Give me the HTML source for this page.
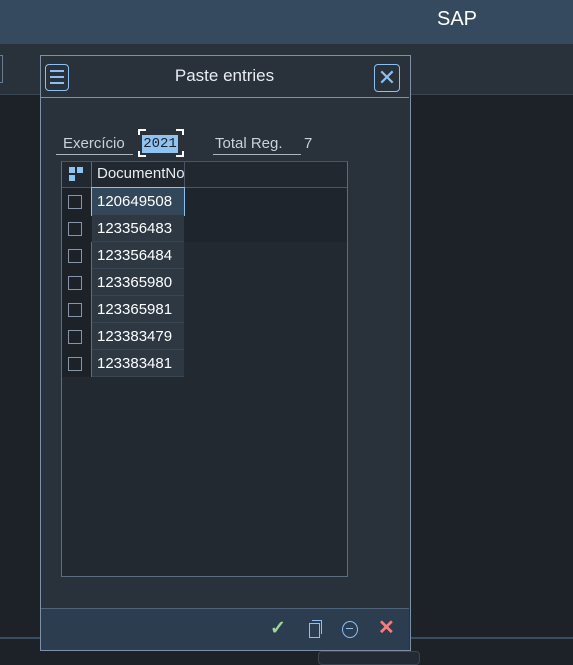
<!DOCTYPE html>
<html><head><style>
html,body{margin:0;height:659px}
body{width:573px;background:#1d2229;font-family:"Liberation Sans",sans-serif;position:relative;overflow:hidden;color:#e8edf2}
.a{position:absolute}
</style></head><body>
<div class="a" style="left:0;top:0;width:573px;height:44px;background:#354a5f"></div>
<div class="a" style="left:437px;top:8px;font-size:20px;color:#fff">SAP</div>
<div class="a" style="left:0;top:44px;width:573px;height:50px;background:#29313a;border-bottom:1px solid #3a4552"></div>
<div class="a" style="left:-4px;top:55px;width:5px;height:26px;border:1px solid #6a7c90"></div>
<div class="a" style="left:0;top:637px;width:573px;height:22px;background:#1d2229;border-top:2px solid #3a4d60"></div>
<div class="a" style="left:318px;top:651px;width:100px;height:12px;background:#232a33;border:1px solid #3a4552;border-radius:4px"></div>
<!-- dialog -->
<div class="a" style="left:40px;top:55px;width:369px;height:594px;background:#29313a;border:1px solid #7d90a5"></div>
<div class="a" style="left:41px;top:97px;width:368px;height:1px;background:#7d90a5"></div>
<div class="a" style="left:45px;top:64px;width:22px;height:25px;border:1px solid #8cc0f0;border-radius:4px"></div>
<div class="a" style="left:50px;top:70px;width:14px;height:2px;background:#8cc0f0;box-shadow:0 6px #8cc0f0,0 12px #8cc0f0"></div>
<div class="a" style="left:374px;top:64px;width:24px;height:26px;border:1px solid #8cc0f0;border-radius:4px;color:#8cc0f0;font-size:22px;text-align:center;line-height:25px">✕</div>
<div class="a" style="left:0;top:66px;width:449px;text-align:center;font-size:17px">Paste entries</div>
<div class="a" style="left:63px;top:135px;font-size:15px;color:#c8d2dc">Exercício</div>
<div class="a" style="left:56px;top:154px;width:77px;height:1px;background:#aab4be"></div>
<div class="a" style="left:142px;top:135px;width:36px;height:18px;background:#8ec3f2;color:#1d2229;font-family:'Liberation Mono',monospace;font-size:14px;line-height:18px;text-align:center">2021</div>
<div class="a" style="left:138px;top:129px;width:6px;height:4px;border-left:2px solid #fff;border-top:2px solid #fff"></div>
<div class="a" style="left:176px;top:129px;width:6px;height:4px;border-right:2px solid #fff;border-top:2px solid #fff"></div>
<div class="a" style="left:138px;top:151px;width:6px;height:4px;border-left:2px solid #fff;border-bottom:2px solid #fff"></div>
<div class="a" style="left:176px;top:151px;width:6px;height:4px;border-right:2px solid #fff;border-bottom:2px solid #fff"></div>
<div class="a" style="left:215px;top:135px;font-size:15px;color:#c8d2dc">Total Reg.</div>
<div class="a" style="left:213px;top:154px;width:88px;height:1px;background:#aab4be"></div>
<div class="a" style="left:304px;top:135px;font-size:15px;color:#c8d2dc">7</div>
<!-- table -->
<div class="a" style="left:61px;top:161px;width:285px;height:414px;background:#232931;border:1px solid #5b6d80;border-top:1px solid #4a5563"></div>
<div class="a" style="left:62px;top:162px;width:285px;height:25px;background:#22282f;border-bottom:1px solid #4a5563"></div>
<div class="a" style="left:91px;top:162px;width:1px;height:215px;background:#5b6d80"></div>
<div class="a" style="left:184px;top:162px;width:1px;height:25px;background:#4a5563"></div>
<div class="a" style="left:69px;top:167px;width:6px;height:6px;background:#8ec3f2;box-shadow:8px 0 #8ec3f2,0 8px #8ec3f2"></div>
<div class="a" style="left:97px;top:165px;font-size:15px">DocumentNo</div>
<div class="a" style="left:62px;top:188px;width:285px;height:54px;background:#1f252c"></div>
<div id="rows"></div>
<script>
var v=["120649508","123356483","123356484","123365980","123365981","123383479","123383481"],h="";
for(var i=0;i<7;i++){var y=188+i*27;
h+='<div class="a" style="left:62px;top:'+y+'px;width:29px;height:27px;background:#1d2229"></div>';
h+='<div class="a" style="left:68px;top:'+(y+7)+'px;width:12px;height:12px;border:1px solid #8696a8"></div>';
h+='<div class="a" style="left:92px;top:'+y+'px;width:92px;height:26px;background:'+(i==0?'#33475b':'#2d3843')+';border-bottom:1px solid #3a4552;'+(i==0?'outline:1px solid #8cc0f0;':'')+'"></div>';
h+='<div class="a" style="left:97px;top:'+(y+5)+'px;font-size:15px;color:#fff">'+v[i]+'</div>';}
document.getElementById('rows').innerHTML=h;
</script>
<!-- footer -->
<div class="a" style="left:41px;top:608px;width:368px;height:41px;background:#2c3d50;border-top:1px solid #4f6479"></div>
<div class="a" style="left:270px;top:617px;color:#9fd69a;font-size:19px;font-weight:bold">✓</div>
<div class="a" style="left:309px;top:623px;width:9px;height:13px;border:1px solid #8cc0f0;background:#2c3d50"></div>
<div class="a" style="left:312px;top:620px;width:9px;height:13px;border:1px solid #8cc0f0;border-left:none;border-bottom:none"></div>
<div class="a" style="left:342px;top:621px;width:14px;height:15px;border:1px solid #8cc0f0;border-radius:50%"></div>
<div class="a" style="left:346px;top:628px;width:7px;height:1px;background:#8cc0f0"></div>
<div class="a" style="left:378px;top:615px;color:#ff7a7a;font-size:20px;font-weight:bold">✕</div>
</body></html>
